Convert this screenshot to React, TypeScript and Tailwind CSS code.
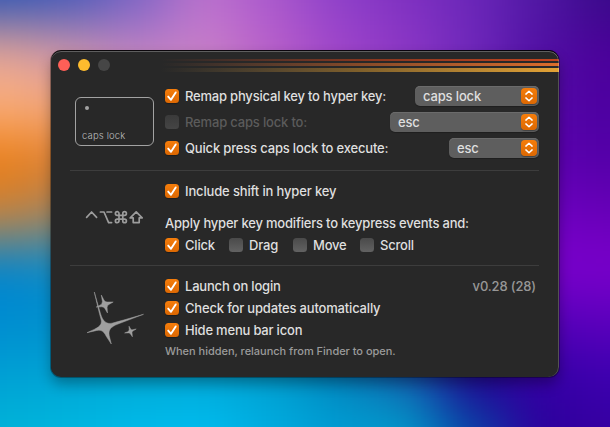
import React from "react";

const MESH: string[][] = [
  ["#2c54b4", "#4458b8", "#7a64c4", "#ba70cc", "#a858cc", "#8c40c8", "#7e30c0", "#6a26b8", "#5018a4", "#380a88"],
  ["#e4a49a", "#cc94b0", "#c080c8", "#cc80cc", "#bc60cc", "#a246cc", "#8e38c8", "#7028bc", "#5010a4", "#4c009a"],
  ["#fcb07c", "#f4a87c", "#d89898", "#b080a0", "#a060b0", "#9040b0", "#8030b0", "#6820b0", "#5408a8", "#4c00a0"],
  ["#ec7c10", "#e08030", "#c08050", "#806080", "#604090", "#603090", "#6020a0", "#6010a8", "#5c00b0", "#5400a8"],
  ["#c88440", "#a08464", "#708090", "#406090", "#303090", "#402090", "#5010a0", "#6000b0", "#6c00c0", "#6800b8"],
  ["#0084d0", "#0c8cc8", "#2088b8", "#2070a8", "#203090", "#201890", "#300898", "#5000b0", "#7c00cc", "#7c00cc"],
  ["#008cd0", "#0090cc", "#0098cc", "#0090c4", "#0070a8", "#102890", "#180090", "#3000a0", "#5400b8", "#5c00bc"],
  ["#00a0d4", "#00a4d4", "#00a8d4", "#00a8d8", "#00a0d0", "#0088bc", "#1464ac", "#20008c", "#3400a4", "#3c00b0"],
  ["#00b4d8", "#00b8e0", "#00bcec", "#00bef0", "#00ace0", "#009cd4", "#009ccc", "#0848a8", "#2c009c", "#3600a0"],
];

const ORANGE =
  "bg-linear-to-b from-[#f57d0b] to-[#dc6803] shadow-[0_1px_1px_rgba(0,0,0,0.3)]";

function Box({ on = false, dim = false }: { on?: boolean; dim?: boolean }) {
  return (
    <span
      className={`flex size-[14px] shrink-0 items-center justify-center rounded-[3.5px] ${
        on ? ORANGE : dim ? "bg-linear-to-b from-[#3a3a3a] to-[#454545]" : "bg-linear-to-b from-[#4a4a4a] to-[#626262]"
      }`}
    >
      {on && (
        <svg viewBox="0 0 14 14" className="size-[14px]" fill="none">
          <path d="M3.2 7.6 6 10.8 10.7 3.4" stroke="#fff" strokeWidth="1.9" strokeLinecap="round" strokeLinejoin="round" />
        </svg>
      )}
    </span>
  );
}

function Check({ label, track, on, dim }: { label: string; track: string; on?: boolean; dim?: boolean }) {
  return (
    <label className={`flex h-[22px] items-center gap-[6px] ${dim ? "text-[#5b5b5b]" : ""}`}>
      <Box on={on} dim={dim} />
      <span className={track}>{label}</span>
    </label>
  );
}

function Select({ value, width }: { value: string; width: string }) {
  return (
    <div className={`flex h-5 items-center justify-between rounded-[5px] bg-[#5e5e5e] pr-[2px] pl-2 shadow-[0_1px_1px_rgba(0,0,0,0.25),inset_0_1px_0_#6b6b6b] ${width}`}>
      <span className="pb-px tracking-[-0.15px]">{value}</span>
      <span className={`flex size-4 items-center justify-center rounded-[4px] ${ORANGE}`}>
        <svg viewBox="0 0 16 16" className="size-4" fill="none" stroke="#fff" strokeWidth="1.5" strokeLinecap="round" strokeLinejoin="round">
          <path d="M4.9 6.1 8 3.2 11.1 6.1M4.9 9.9 8 12.8 11.1 9.9" />
        </svg>
      </span>
    </div>
  );
}

export default function App() {
  return (
    <div className="relative h-[427px] w-[610px] overflow-hidden bg-[#402090] font-['Inter','Liberation_Sans',sans-serif]">
      <div className="absolute -inset-[97px] grid grid-cols-[134px_repeat(8,1fr)_134px] grid-rows-[121px_repeat(7,1fr)_121px] blur-[27px]">
        {MESH.flat().map((c, i) => (
          <div key={i} style={{ backgroundColor: c }} />
        ))}
      </div>
      <div className="absolute top-[51px] left-[51px] flex h-[326px] w-[508px] flex-col overflow-hidden rounded-[10px] bg-[#282828] text-[13px] leading-4 font-medium text-[#dfdfdf] shadow-[0_-1px_0_rgba(0,0,0,0.9),0_0_0_1px_rgba(0,0,0,0.3),0_7px_14px_rgba(0,0,0,0.32)]">
        <header className="flex h-[35px] shrink-0">
          <div className="flex w-[110px] gap-2 pt-2 pl-[7px]">
            <i className="size-3 rounded-full bg-[#ff5f57]" />
            <i className="size-3 rounded-full bg-[#febc2e]" />
            <i className="size-3 rounded-full bg-[#464646]" />
          </div>
          <div className="flex flex-1 flex-col pt-2">
            <div className="h-[2px] bg-linear-to-r from-[#282828] via-[#84351f] to-[#c3441f]" />
            <div className="mt-[2px] h-[3px] bg-linear-to-r from-[#282828] via-[#874a28] to-[#dc6d2b]" />
            <div className="mt-[2px] h-[4px] bg-linear-to-r from-[#282828] via-[#80602b] to-[#e3a336]" />
          </div>
        </header>

        <section className="mr-5 ml-[19px] flex h-[85px] shrink-0 border-b border-[#3d3d3d]">
          <div className="w-[95px] shrink-0 pt-[11px] pl-[5px]">
            <div className="flex h-[49px] w-[79px] flex-col justify-between rounded-[6px] border border-[#a2a2a2] pt-2 pb-[3px] pl-[6px]">
              <i className="ml-[3px] size-1 rounded-full bg-[#a2a2a2]" />
              <span className="text-[9.5px] leading-3 font-light tracking-[0.15px] text-[#bdbdbd]">caps lock</span>
            </div>
          </div>
          <div className="flex flex-1 flex-col gap-[6px]">
            <div className="flex h-5 items-center justify-between">
              <Check label="Remap physical key to hyper key:" track="tracking-[-0.2px]" on />
              <Select value="caps lock" width="w-[124px]" />
            </div>
            <div className="flex h-5 items-center justify-between">
              <Check label="Remap caps lock to:" track="tracking-[-0.17px]" dim />
              <Select value="esc" width="w-[149px]" />
            </div>
            <div className="flex h-5 items-center justify-between">
              <Check label="Quick press caps lock to execute:" track="tracking-[-0.17px]" on />
              <Select value="esc" width="w-[90px]" />
            </div>
          </div>
        </section>

        <section className="mr-5 ml-[19px] flex h-[95px] shrink-0 border-b border-[#3d3d3d]">
          <div className="w-[95px] shrink-0 pt-[38px] pl-[14px]">
            <svg viewBox="0 0 60 16" className="h-4 w-[60px]" fill="none" stroke="#9c9c9c" strokeWidth="1.7" strokeLinecap="round" strokeLinejoin="round">
              <path d="M2.6 8.4 7.6 3 12.6 8.4" />
              <path d="M16.4 3H20L24.6 13.6H27.6M23 3H27.6" />
              <path d="M35 6.3H38.8V10.1H35ZM35 6.3H33.2A1.8 1.8 0 1 1 35 4.5ZM38.8 6.3V4.5A1.8 1.8 0 1 1 40.6 6.3ZM38.8 10.1H40.6A1.8 1.8 0 1 1 38.8 11.9ZM35 10.1V11.9A1.8 1.8 0 1 1 33.2 10.1Z" />
              <path d="M52.2 2.9 58.2 8.9H55.2V13.6H49.2V8.9H46.2Z" />
            </svg>
          </div>
          <div className="flex flex-1 flex-col">
            <div className="pt-[9px]">
              <Check label="Include shift in hyper key" track="tracking-[-0.15px]" on />
            </div>
            <p className="mt-[13px] tracking-[-0.2px]">Apply hyper key modifiers to keypress events and:</p>
            <div className="mt-[3px] flex">
              <div className="w-16"><Check label="Click" track="tracking-[-0.2px]" on /></div>
              <div className="w-16"><Check label="Drag" track="tracking-[-0.2px]" /></div>
              <div className="w-[67px]"><Check label="Move" track="tracking-[-0.2px]" /></div>
              <Check label="Scroll" track="tracking-[-0.2px]" />
            </div>
          </div>
        </section>

        <section className="mr-5 ml-[19px] flex flex-1 pt-[9px]">
          <div className="w-[95px] shrink-0 pt-[15px] pl-[16px]">
            <svg viewBox="0 0 60 56" className="h-[56px] w-[60px]" fill="#9f9f9f" stroke="#9f9f9f" strokeWidth="0.5" strokeLinejoin="round">
              <path d="M8.3 2 14.6 24C17 31.4 20.4 34.4 26 33.2Q36 30.6 57.5 24.3L32 34C24.6 37 22.2 39.8 23.2 45.6L25.3 54 20.2 46.2C17.4 40.4 14.4 39.4 8.8 40.9L1 42.7 8.2 39.4C14.8 36.2 16.4 33.4 14.8 28.6Q12.4 20 8.3 2Z" />
              <path d="M15.3 5 17.9 10Q18.9 12 21 12L27.2 12 22.9 14.5Q21 15.6 21.1 17.4L21.5 23 19 18.7Q18 16.8 15.8 16.8L10.2 17.1 14 15.2Q16.6 13.8 16.4 11.4Z" />
              <path d="M43 36.2 44.6 39Q45.2 40 46.6 39.7L50.2 39 47.3 40.8Q46 41.6 46 42.6L46.4 46.8 44.5 43.9Q43.8 42.9 42.6 42.9L38.6 43 41.8 41.7Q43.2 41 43.2 39.8Z" />
            </svg>
          </div>
          <div className="flex flex-1 flex-col">
            <div className="flex items-center justify-between">
              <Check label="Launch on login" track="tracking-[-0.2px]" on />
              <span className="pr-[3px] tracking-[-0.15px] text-[#979797]">v0.28 (28)</span>
            </div>
            <Check label="Check for updates automatically" track="tracking-[-0.18px]" on />
            <Check label="Hide menu bar icon" track="tracking-[-0.2px]" on />
            <p className="mt-[2px] text-[11px] leading-4 tracking-[-0.02px] text-[#9b9b9b]">When hidden, relaunch from Finder to open.</p>
          </div>
        </section>
        <div className="pointer-events-none absolute inset-0 rounded-[10px] shadow-[inset_0_1px_0_rgba(255,255,255,0.25),inset_-1px_0_0_rgba(255,255,255,0.2)]" />
      </div>
    </div>
  );
}
